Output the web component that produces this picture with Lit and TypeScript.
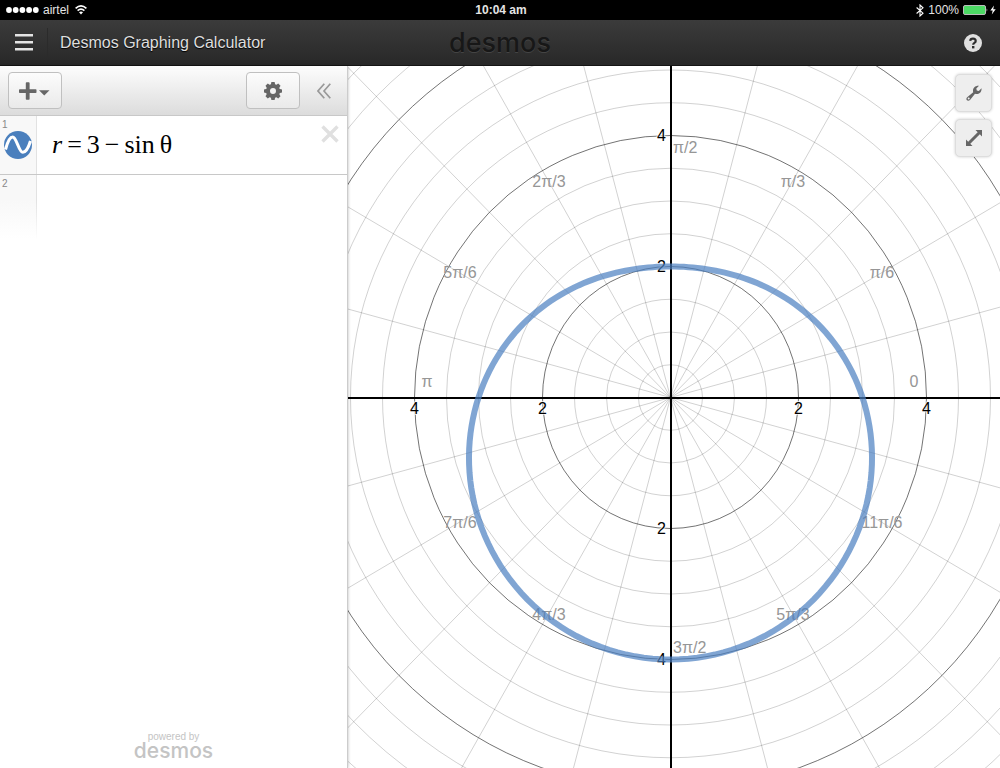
import { LitElement, html, svg, css } from "lit";
import { customElement, state } from "lit/decorators.js";

const CX = 322.5;
const CY = 331.5;
const AXIS_X = 323;
const AXIS_Y = 332;
const UX = 64;
const UY = 65.5;

type Label = { text: string; x: number; y: number; anchor: "start" | "middle" | "end" };

const angleLabels: Label[] = [
  { text: "0", x: 566, y: 321, anchor: "middle" },
  { text: "π/6", x: 534, y: 212, anchor: "middle" },
  { text: "π/3", x: 445, y: 121, anchor: "middle" },
  { text: "π/2", x: 325, y: 87, anchor: "start" },
  { text: "2π/3", x: 201, y: 121, anchor: "middle" },
  { text: "5π/6", x: 112, y: 212, anchor: "middle" },
  { text: "π", x: 79, y: 321, anchor: "middle" },
  { text: "7π/6", x: 112, y: 462, anchor: "middle" },
  { text: "4π/3", x: 201, y: 554, anchor: "middle" },
  { text: "3π/2", x: 325, y: 587, anchor: "start" },
  { text: "5π/3", x: 445, y: 554, anchor: "middle" },
  { text: "11π/6", x: 534, y: 462, anchor: "middle" },
];

const axisLabels: Label[] = [2, 4].flatMap((n): Label[] => [
  { text: String(n), x: CX - n * UX, y: 348, anchor: "middle" },
  { text: String(n), x: CX + n * UX, y: 348, anchor: "middle" },
  { text: String(n), x: 318, y: Math.floor(CY - n * UY) + 6, anchor: "end" },
  { text: String(n), x: 318, y: Math.floor(CY + n * UY) + 6, anchor: "end" },
]);

@customElement("polar-graph")
export class PolarGraph extends LitElement {
  static styles = css`
    :host { display: block; overflow: hidden; background: #fff; }
    .plot { display: block; width: 100%; height: 100%; font: 16px "Liberation Sans", Arial, sans-serif; }
    .minor { fill: none; stroke: #000; stroke-opacity: 0.18; }
    .major { fill: none; stroke: #000; stroke-opacity: 0.55; }
    .axis { stroke: #000; stroke-width: 2; }
    .angle { fill: #969696; }
    .number { fill: #000; stroke: #fff; stroke-width: 2; stroke-opacity: 0.7; paint-order: stroke; }
    .curve { fill: none; stroke: #4a7fc1; stroke-width: 6; stroke-opacity: 0.7; }
  `;

  private curve(): string {
    const points: string[] = [];
    for (let deg = 0; deg < 360; deg += 2) {
      const t = (deg * Math.PI) / 180;
      const r = 3 - Math.sin(t);
      points.push(`${(CX + UX * r * Math.cos(t)).toFixed(2)} ${(CY - UY * r * Math.sin(t)).toFixed(2)}`);
    }
    return `M${points.join("L")}Z`;
  }

  render() {
    const rings = Array.from({ length: 16 }, (_, i) => (i + 1) / 2);
    const rays = Array.from({ length: 24 }, (_, i) => (i * Math.PI) / 12);
    const text = (l: Label, cls: string) =>
      svg`<text class=${cls} x=${l.x} y=${l.y} text-anchor=${l.anchor}>${l.text}</text>`;
    return html`
      <svg class="plot" viewBox="0 0 652 702" preserveAspectRatio="xMidYMid slice" role="img" aria-label="Polar graph of r = 3 − sin θ">
        ${rays.map((a) => svg`<line class="minor" x1=${CX} y1=${CY} x2=${CX + 9 * UX * Math.cos(a)} y2=${CY - 9 * UY * Math.sin(a)}></line>`)}
        ${rings.map((r) => svg`<ellipse class=${r % 2 ? "minor" : "major"} cx=${CX} cy=${CY} rx=${r * UX} ry=${r * UY}></ellipse>`)}
        <line class="axis" x1="-400" y1=${AXIS_Y} x2="1100" y2=${AXIS_Y}></line>
        <line class="axis" x1=${AXIS_X} y1="-400" x2=${AXIS_X} y2="1100"></line>
        ${angleLabels.map((l) => text(l, "angle"))}
        ${axisLabels.map((l) => text(l, "number"))}
        <path class="curve" d=${this.curve()}></path>
      </svg>
    `;
  }
}

@customElement("app-root")
export class AppRoot extends LitElement {
  @state() private draft = "";

  static styles = css`
    :host { display: flex; flex-direction: column; height: 100vh; overflow: hidden; background: #fff; font-family: "Liberation Sans", Arial, sans-serif; }
    * { box-sizing: border-box; }
    button { margin: 0; padding: 0; border: 0; background: none; font: inherit; color: inherit; display: flex; align-items: center; justify-content: center; cursor: pointer; }
    svg { display: block; }
    .status { flex: none; display: grid; grid-template-columns: 1fr auto 1fr; align-items: center; height: 20px; padding: 0 4px 0 6px; background: #000; color: #e4e4e4; font-size: 12px; line-height: 20px; }
    .carrier { display: flex; align-items: center; gap: 4px; }
    .carrier .wifi { margin-left: 2px; }
    .clock { font-weight: bold; }
    .power { display: flex; align-items: center; justify-content: flex-end; gap: 4px; }
    .battery { display: flex; align-items: center; gap: 2px; }
    .header { flex: none; display: grid; grid-template-columns: 1fr auto 1fr; align-items: center; height: 46px; background: linear-gradient(#3b3b3b, #282828); border-bottom: 1px solid #151515; color: #dedede; }
    .lead { display: flex; align-items: center; height: 30px; }
    .menu { width: 47px; height: 30px; }
    .title { margin: 0; padding-left: 12px; border-left: 1px solid #2b2b2b; font-size: 16px; line-height: 30px; font-weight: normal; white-space: nowrap; text-shadow: 0 1px 1px #000; }
    .logo { font-family: Inter, sans-serif; font-size: 27px; line-height: 40px; font-weight: 500; color: #171717; text-shadow: 0 1px 0 #444; }
    .help { justify-self: end; width: 54px; height: 44px; }
    .main { flex: 1; display: flex; min-height: 0; }
    .panel { flex: none; width: 348px; display: flex; flex-direction: column; border-right: 1px solid #ccc; box-shadow: 0 0 3px #0004; background: #fff; z-index: 1; }
    .toolbar { flex: none; display: flex; align-items: center; height: 50px; padding: 0 8px; background: linear-gradient(#fdfdfd, #dcdcdc); border-bottom: 1px solid #c8c8c8; color: #666; }
    .tool { width: 54px; height: 37px; border: 1px solid #c0c0c0; border-radius: 4px; background: linear-gradient(#fcfcfc, #eaeaea); }
    .spacer { flex: 1; }
    .collapse { width: 47px; height: 37px; margin-right: -8px; color: #999; }
    .list { flex: 1; margin: 0; padding: 0; list-style: none; }
    .row { display: flex; }
    .first { height: 59px; border-bottom: 1px solid #c8c8c8; }
    .gutter { flex: none; width: 37px; padding: 3px 0 0 2px; border-right: 1px solid #e2e2e2; background: #f8f8f8; font-size: 10px; line-height: 12px; color: #888; }
    .fading { height: 64px; background: linear-gradient(#f8f8f8 40%, #fff); border-image: linear-gradient(#e2e2e2 40%, #fff) 1; }
    .swatch { width: 32px; height: 28px; }
    .math { flex: 1; display: flex; align-items: center; padding-left: 15px; font: 26px/56px "Liberation Serif", "Times New Roman", serif; color: #000; }
    .variable { font-style: italic; }
    .operator { padding: 0 5px; }
    .theta { padding-left: 5px; }
    .remove { width: 34px; height: 35px; }
    .entry { flex: 1; min-width: 0; height: 58px; border: 0; outline: 0; padding: 0 15px; background: none; font: 26px "Liberation Serif", "Times New Roman", serif; }
    .powered { flex: none; display: flex; flex-direction: column; align-items: center; padding-bottom: 9px; color: #c4c4c4; font-size: 10px; line-height: 12px; }
    .brand { font-family: Inter, sans-serif; font-size: 21px; line-height: 16px; font-weight: 500; }
    .stage { flex: 1; min-width: 0; position: relative; }
    .graph { height: 100%; }
    .controls { position: absolute; top: 8px; right: 8px; display: flex; flex-direction: column; gap: 7px; color: #666; }
    .control { width: 37px; height: 38px; border: 1px solid #ddd; border-radius: 5px; background: #eee; box-shadow: 0 0 3px #0003; }
  `;

  render() {
    return html`
      <div class="status">
        <div class="carrier">
          <svg width="33" height="8" viewBox="0 0 33 8" fill="#fff">
            ${[3, 9.7, 16.4, 23.1, 29.8].map((x) => svg`<circle cx=${x} cy="4" r="2.9"></circle>`)}
          </svg>
          <span>airtel</span>
          <svg class="wifi" width="12" height="10" viewBox="0 0 12 10" fill="none" stroke="#fff" stroke-width="1.6">
            <path d="M.6 3.4Q6-1.5 11.4 3.4M2.6 5.7Q6 2.6 9.4 5.7"></path>
            <path d="M4 7.2Q6 5.6 8 7.2L6 9.4Z" fill="#fff" stroke="none"></path>
          </svg>
        </div>
        <time class="clock">10:04 am</time>
        <div class="power">
          <svg width="8" height="13" viewBox="0 0 8 13" fill="none" stroke="#fff" stroke-width="1.1"><path d="M.6 3.5L7 9.2 4 12V1L7 3.8.6 9.5"></path></svg>
          <span>100%</span>
          <div class="battery">
            <svg width="25" height="10" viewBox="0 0 25 10"><rect x=".5" y=".5" width="22" height="9" rx="1.5" fill="#4cd964" stroke="#bbb"></rect><path d="M23.7 3.2q1.2 1.8 0 3.6z" fill="#fff"></path></svg>
            <svg width="6" height="10" viewBox="0 0 6 10" fill="#fff"><path d="M4 .5L.3 5.5H2.7L1.8 9.5 5.7 4.2H3.2Z"></path></svg>
          </div>
        </div>
      </div>
      <header class="header">
        <div class="lead">
          <button class="menu" aria-label="Menu">
            <svg width="18" height="17" viewBox="0 0 18 17" fill="#e4e4e4"><path d="M0 0h18v2.6H0zM0 7h18v2.6H0zM0 14h18v2.6H0z"></path></svg>
          </button>
          <h1 class="title">Desmos Graphing Calculator</h1>
        </div>
        <div class="logo">desmos</div>
        <button class="help" aria-label="Help">
          <svg width="18" height="18" viewBox="0 0 18 18"><circle cx="9" cy="9" r="9" fill="#e0e0e0"></circle><path d="M6.2 6.9Q6.3 4.6 9 4.6T11.7 7Q11.7 8.2 10.4 8.9 9.2 9.6 9.2 10.8" fill="none" stroke="#2d2d2d" stroke-width="2.2"></path><rect x="8" y="12" width="2.4" height="2.4" fill="#2d2d2d"></rect></svg>
        </button>
      </header>
      <main class="main">
        <section class="panel" aria-label="Expressions">
          <div class="toolbar">
            <button class="tool" aria-label="Add item">
              <svg width="32" height="18" viewBox="0 0 32 18" fill="#666"><rect x="0" y="7.200" width="17.500" height="3.800" rx=".8"></rect><rect x="6.800" y=".3" width="3.800" height="17.500" rx=".8"></rect><path d="M20 8.200h10.500l-5.250 5.400z"></path></svg>
            </button>
            <span class="spacer"></span>
            <button class="tool" aria-label="Edit list">
              <svg width="18" height="18" viewBox="-9 -9 18 18">
                <circle r="5" fill="none" stroke="#666" stroke-width="4"></circle>
                ${[0, 45, 90, 135, 180, 225, 270, 315].map((a) => svg`<path transform="rotate(${a})" d="M-2.3-6L-1.6-9H1.6L2.3-6Z" fill="#666"></path>`)}
              </svg>
            </button>
            <button class="collapse" aria-label="Hide list">
              <svg width="14" height="16" viewBox="0 0 14 16" fill="none" stroke="#999" stroke-width="1.7"><path d="M7.3.7L1 8l6.3 7.3M13.3.7L7 8l6.3 7.3"></path></svg>
            </button>
          </div>
          <ol class="list">
            <li class="row first">
              <div class="gutter">1
                <button class="swatch" aria-label="Toggle graph 1">
                  <svg width="28" height="28" viewBox="0 0 28 28"><circle cx="14" cy="14" r="14" fill="#4a7fbd"></circle><path d="M1.500 18.500C3.500 11 6 6 8.700 6C12.500 6 14.800 21.300 18.800 21.300C22 21.300 24.500 16.500 26.500 10" fill="none" stroke="#fff" stroke-width="3.100"></path></svg>
                </button>
              </div>
              <div class="math" role="math" aria-label="r = 3 − sin θ"><span class="variable">r</span><span class="operator">=</span><span>3</span><span class="operator">−</span><span>sin</span><span class="theta">θ</span></div>
              <button class="remove" aria-label="Delete expression 1">
                <svg width="18" height="18" viewBox="0 0 18 18" stroke="#e0e0e0" stroke-width="3.4"><path d="M1.500 1.500l15 15M16.500 1.500l-15 15"></path></svg>
              </button>
            </li>
            <li class="row">
              <label class="gutter fading" for="entry">2</label>
              <input id="entry" class="entry" .value=${this.draft} @input=${(e: Event) => (this.draft = (e.target as HTMLInputElement).value)}>
            </li>
          </ol>
          <div class="powered"><span>powered by</span><span class="brand">desmos</span></div>
        </section>
        <section class="stage" aria-label="Graph">
          <polar-graph class="graph"></polar-graph>
          <div class="controls">
            <button class="control" aria-label="Graph settings">
              <svg width="16" height="16" viewBox="0 0 16 16"><path d="M1.200 12.300L7.200 7.300C6.200 3.500 8.800.300 13 .700L10.300 3.600 10.800 5.500 12.800 5.900 15.500 3.200C16 7.200 12.700 9.800 9 8.800L4 14.900C1.800 17-1 14.400 1.200 12.300Z" fill="#666"></path><circle cx="2.700" cy="13.500" r="1" fill="#eee"></circle></svg>
            </button>
            <button class="control" aria-label="Full screen">
              <svg width="16" height="16" viewBox="0 0 16 16" fill="#666"><path d="M9.500 0H16v6.500l-2.200-2.200-9.500 9.500L6.500 16H0V9.500l2.200 2.200 9.500-9.500z"></path></svg>
            </button>
          </div>
        </section>
      </main>
    `;
  }
}
